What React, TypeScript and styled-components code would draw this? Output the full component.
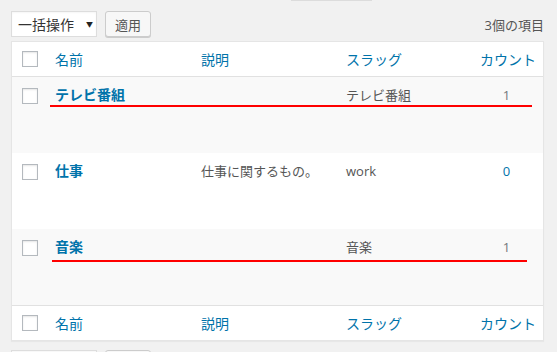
import React from 'react';
import styled, { createGlobalStyle } from 'styled-components';

const GlobalStyle = createGlobalStyle`
  html, body {
    margin: 0;
    padding: 0;
    background: #f1f1f1;
  }
  body {
    font-family: "Open Sans", "Noto Sans CJK JP", sans-serif;
    color: #555;
  }
`;

type Term = {
  name: string;
  desc: string;
  slug: string;
  count: number;
  marker?: { top: number; left: number; right: number };
};

const terms: Term[] = [
  { name: 'テレビ番組', desc: '', slug: 'テレビ番組', count: 1, marker: { top: 28, left: 38, right: 11 } },
  { name: '仕事', desc: '仕事に関するもの。', slug: 'work', count: 0 },
  { name: '音楽', desc: '', slug: '音楽', count: 1, marker: { top: 31, left: 40, right: 16 } },
];

const App = () => {
  return (
    <>
      <GlobalStyle />
      <Page>
        <TopEdge />
        <Toolbar>
          <BulkSelect>
            一括操作
            <Arrow>▼</Arrow>
          </BulkSelect>
          <ApplyButton>適用</ApplyButton>
          <ItemCount>3個の項目</ItemCount>
        </Toolbar>
        <Table>
          <HeadRow>
            <CheckCell><CheckBox /></CheckCell>
            <HeadCell>名前</HeadCell>
            <HeadCell>説明</HeadCell>
            <HeadCell>スラッグ</HeadCell>
            <HeadCell $center>カウント</HeadCell>
          </HeadRow>
          {terms.map((t, i) => (
            <BodyRow key={t.name} $alt={i % 2 === 0}>
              <CheckCell><CheckBox $offset /></CheckCell>
              <Cell><RowTitle>{t.name}</RowTitle></Cell>
              <Cell>{t.desc}</Cell>
              <Cell>{t.slug}</Cell>
              <Cell $center><CountLink $zero={t.count === 0}>{t.count}</CountLink></Cell>
              {t.marker && (
                <Marker style={{ top: t.marker.top, left: t.marker.left, right: t.marker.right }} />
              )}
            </BodyRow>
          ))}
          <FootRow>
            <CheckCell><CheckBox /></CheckCell>
            <HeadCell>名前</HeadCell>
            <HeadCell>説明</HeadCell>
            <HeadCell>スラッグ</HeadCell>
            <HeadCell $center>カウント</HeadCell>
          </FootRow>
        </Table>
        <Toolbar $bottom>
          <BulkSelect>
            一括操作
            <Arrow>▼</Arrow>
          </BulkSelect>
          <ApplyButton>適用</ApplyButton>
        </Toolbar>
      </Page>
    </>
  );
};

export default App;

const Page = styled.div`
  width: 557px;
  height: 352px;
  overflow: hidden;
  padding: 0 13px 0 11px;
  box-sizing: border-box;
`;

const TopEdge = styled.div`
  width: 81px;
  height: 1px;
  margin-left: 280px;
  background: #dcdcdc;
`;

const Toolbar = styled.div<{ $bottom?: boolean }>`
  display: flex;
  align-items: center;
  height: 26px;
  margin-top: ${p => (p.$bottom ? '9px' : '10px')};
`;

const BulkSelect = styled.div`
  width: 86px;
  height: 26px;
  box-sizing: border-box;
  display: flex;
  align-items: center;
  padding-left: 6px;
  background: #fff;
  border: 1px solid #ddd;
  box-shadow: inset 0 1px 2px rgba(0, 0, 0, 0.04);
  font-size: 14px;
  color: #333;
`;

const Arrow = styled.span`
  font-size: 7px;
  margin-left: 12px;
  color: #222;
`;

const ApplyButton = styled.div`
  height: 26px;
  box-sizing: border-box;
  margin-left: 8px;
  padding: 0 9px;
  display: flex;
  align-items: center;
  background: #f7f7f7;
  border: 1px solid #ccc;
  border-radius: 3px;
  box-shadow: 0 1px 0 #ccc;
  font-size: 13px;
  color: #555;
`;

const ItemCount = styled.div`
  margin-left: auto;
  margin-top: 1px;
  font-size: 13px;
  color: #555;
`;

const Table = styled.div`
  margin-top: 4px;
  background: #fff;
  border: 1px solid #e5e5e5;
  box-shadow: 0 1px 1px rgba(0, 0, 0, 0.04);
`;

const rowGrid = `
  display: grid;
  grid-template-columns: 33px 146px 145px 134px 73px;
`;

const HeadRow = styled.div`
  ${rowGrid}
  height: 34px;
  align-items: center;
  border-bottom: 1px solid #e1e1e1;
`;

const FootRow = styled(HeadRow)`
  border-bottom: none;
  border-top: 1px solid #e1e1e1;
`;

const BodyRow = styled.div<{ $alt?: boolean }>`
  ${rowGrid}
  position: relative;
  height: 76px;
  align-items: start;
  background: ${p => (p.$alt ? '#f9f9f9' : '#fff')};
`;

const CheckCell = styled.div`
  padding-left: 10px;
`;

const CheckBox = styled.div<{ $offset?: boolean }>`
  width: 16px;
  height: 16px;
  box-sizing: border-box;
  margin-top: ${p => (p.$offset ? '11px' : '0')};
  border: 1px solid #b4b9be;
  background: #fff;
  box-shadow: inset 0 1px 2px rgba(0, 0, 0, 0.1);
`;

const HeadCell = styled.div<{ $center?: boolean }>`
  padding: 0 10px;
  font-size: 14px;
  color: #0073aa;
  white-space: nowrap;
  text-align: ${p => (p.$center ? 'center' : 'left')};
`;

const Cell = styled.div<{ $center?: boolean }>`
  padding: 8px 10px 0;
  line-height: 20px;
  font-size: 13px;
  color: #555;
  white-space: nowrap;
  text-align: ${p => (p.$center ? 'center' : 'left')};
`;

const RowTitle = styled.span`
  font-size: 14px;
  font-weight: 600;
  color: #0073aa;
`;

const CountLink = styled.span<{ $zero?: boolean }>`
  color: ${p => (p.$zero ? '#0073aa' : '#72777c')};
`;

const Marker = styled.div`
  position: absolute;
  height: 2px;
  background: #ff0000;
`;
